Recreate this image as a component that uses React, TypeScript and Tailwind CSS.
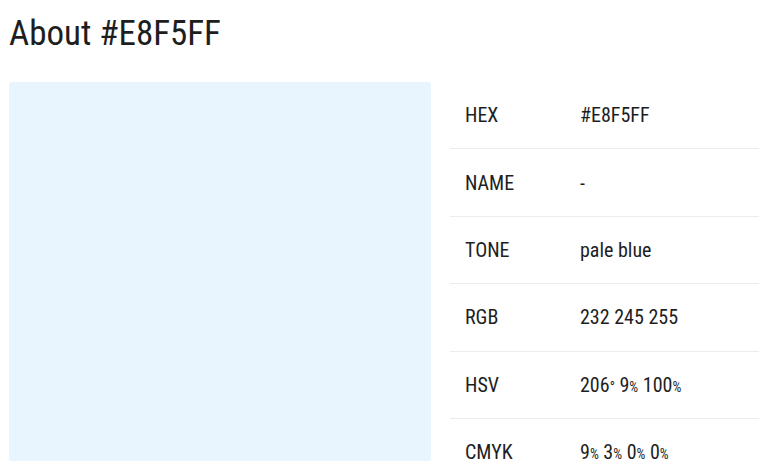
const rows: { label: string; value: React.ReactNode }[] = [
  { label: "HEX", value: "#E8F5FF" },
  { label: "NAME", value: "-" },
  { label: "TONE", value: "pale blue" },
  { label: "RGB", value: "232 245 255" },
  {
    label: "HSV",
    value: (
      <>
        206<Small>°</Small> 9<Small>%</Small> 100<Small>%</Small>
      </>
    ),
  },
  {
    label: "CMYK",
    value: (
      <>
        9<Small>%</Small> 3<Small>%</Small> 0<Small>%</Small> 0<Small>%</Small>
      </>
    ),
  },
];

function Small({ children }: { children: React.ReactNode }) {
  return <span className="text-[0.7em]">{children}</span>;
}

const App = () => {
  return (
    <div
      className="w-[759px] h-[472px] overflow-hidden bg-white text-[#1e1e1e]"
      style={{ fontFamily: '"Roboto Condensed", "Liberation Sans Narrow", "DejaVu Sans Condensed", Roboto, sans-serif' }}
    >
      <h1 className="pl-[9px] pt-[14px] text-[35px] leading-[40px] font-normal">About #E8F5FF</h1>
      <div className="mt-[28px] flex pl-[9px] gap-[19px]">
        <div className="w-[422px] h-[379px] shrink-0 rounded-[3px] bg-[#E8F5FF]" />
        <div className="flex-1">
          {rows.map((r) => (
            <div
              key={r.label}
              className="flex items-center h-[67.4px] border-b border-[#ececec] text-[20px]"
            >
              <span className="w-[130px] pl-[15px]">{r.label}</span>
              <span>{r.value}</span>
            </div>
          ))}
        </div>
      </div>
    </div>
  );
};

export default App;
